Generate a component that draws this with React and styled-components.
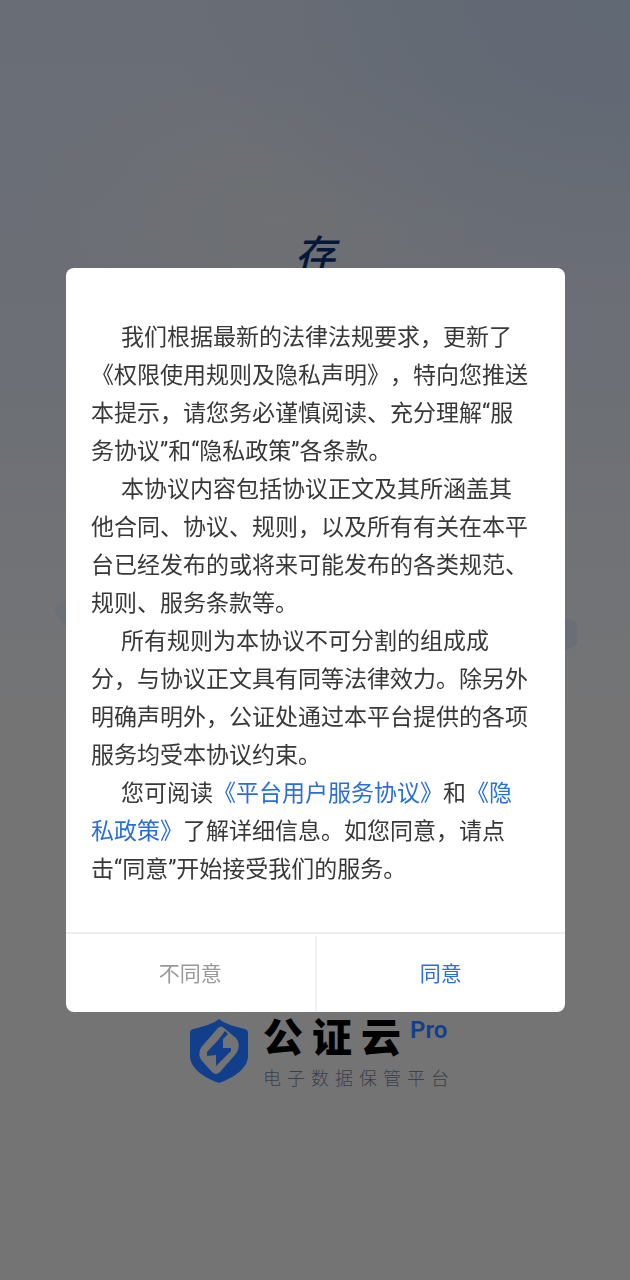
import styled, { createGlobalStyle } from "styled-components";

const GlobalStyle = createGlobalStyle`
  * {
    box-sizing: border-box;
  }
  body {
    margin: 0;
    font-family: Roboto, "Noto Sans CJK SC", sans-serif;
    text-spacing-trim: space-all;
  }
`;

const Splash = styled.main`
  display: flex;
  flex-direction: column;
  align-items: center;
  min-height: 100vh;
  padding: 224px 0 189px;
  background:
    radial-gradient(ellipse 460px 300px at 100% 0, #606874 0%, rgba(96, 104, 116, 0) 100%),
    radial-gradient(ellipse 240px 160px at 44% 220px, #6e7073 0%, rgba(110, 112, 115, 0) 100%),
    linear-gradient(#696d75 0, #6b6e75 300px, #717376 600px, #747474 730px, #747474 100%);
`;

const Slogan = styled.h1`
  margin: 0;
  font-family: "Noto Sans CJK SC", sans-serif;
  font-size: 40px;
  font-style: italic;
  font-weight: 500;
  line-height: 56px;
  color: #06173a;
`;

const Illustration = styled.svg`
  width: 100%;
  height: 120px;
  margin: 290px 0 auto;
`;

const Brand = styled.div`
  display: flex;
  align-items: center;
  gap: 14px;
  padding-left: 14px;
`;

const Shield = styled.svg`
  width: 60px;
  height: 66px;
`;

const BrandText = styled.div`
  display: flex;
  flex-direction: column;
  gap: 4px;
`;

const BrandName = styled.div`
  display: flex;
  align-items: flex-start;
  font-family: "Noto Sans CJK SC", sans-serif;
  font-size: 40px;
  font-weight: 900;
  line-height: 48px;
  letter-spacing: 9px;
  color: #000;
`;

const Edition = styled.span`
  font-family: Roboto, sans-serif;
  font-size: 24px;
  font-weight: 600;
  line-height: 38px;
  letter-spacing: 0;
  color: #123f8c;
`;

const Tagline = styled.div`
  font-family: "Noto Sans CJK SC", sans-serif;
  font-size: 18px;
  font-weight: 300;
  line-height: 28px;
  letter-spacing: 6px;
  color: #3a3f49;
`;

const Overlay = styled.div`
  position: fixed;
  inset: 0;
  display: flex;
  align-items: center;
  padding: 0 65px 0 66px;
`;

const Dialog = styled.section`
  width: 100%;
  border-radius: 8px;
  background: #fff;
  overflow: hidden;
`;

const Content = styled.div`
  padding: 51px 31px 43px 25px;
`;

const Paragraph = styled.p`
  margin: 0;
  font-size: 23px;
  line-height: 38px;
  text-indent: 30px;
  color: #383838;
`;

const Link = styled.a`
  color: #2a6fd6;
  text-decoration: none;
`;

const Actions = styled.div`
  display: flex;
  border-top: 2px solid #eee;
  padding-top: 2px;
`;

const Action = styled.button`
  flex: 1;
  height: 76px;
  padding: 0 0 4px;
  border: 0;
  background: none;
  font-family: inherit;
  font-size: 21px;
  color: ${({ $primary }) => ($primary ? "#2a6fd6" : "#999")};

  & + & {
    border-left: 2px solid #f2f2f2;
  }
`;

const App = () => {
  return (
    <>
      <GlobalStyle />
      <Splash>
        <Slogan>存</Slogan>
        <Illustration viewBox="0 0 630 120" preserveAspectRatio="none" aria-hidden="true">
          <path d="M53 40 68 26V60Z" fill="#6c7177" />
          <path d="M560 44 577 54V74L560 84Z" fill="#696e77" />
        </Illustration>
        <Brand>
          <Shield viewBox="0 0 60 66" aria-hidden="true">
            <path
              d="M30 1C36 6 47 9 56 11Q59 12 59 15V39C58 51 44 60 30 65 16 60 2 51 1 39V15Q1 12 4 11C13 9 24 6 30 1Z"
              fill="#123f8c"
            />
            <path
              d="M29 10Q32 7 35 10L47 20Q51 25 49 32 48 35 45 38L31 54Q27 58 23 54L13 43Q9 38 11 32 12 29 15 26Z"
              fill="#747474"
            />
            <path d="M36 13 39 16 33 22 30 21Z" fill="#123f8c" />
            <path d="M18 38V34L31 20 34 19V30H42V33L27 48V37Z" fill="#123f8c" />
          </Shield>
          <BrandText>
            <BrandName>
              公证云<Edition>Pro</Edition>
            </BrandName>
            <Tagline>电子数据保管平台</Tagline>
          </BrandText>
        </Brand>
      </Splash>
      <Overlay>
        <Dialog role="dialog" aria-modal="true">
          <Content>
            <Paragraph>
              我们根据最新的法律法规要求，更新了《权限使用规则及隐私声明》，特向您推送本提示，请您务必谨慎阅读、充分理解“服务协议”和“隐私政策”各条款。
            </Paragraph>
            <Paragraph>
              本协议内容包括协议正文及其所涵盖其他合同、协议、规则，以及所有有关在本平台已经发布的或将来可能发布的各类规范、规则、服务条款等。
            </Paragraph>
            <Paragraph>
              所有规则为本协议不可分割的组成成分，与协议正文具有同等法律效力。除另外明确声明外，公证处通过本平台提供的各项服务均受本协议约束。
            </Paragraph>
            <Paragraph>
              您可阅读<Link href="#service">《平台用户服务协议》</Link>和<Link href="#privacy">《隐私政策》</Link>了解详细信息。如您同意，请点击“同意”开始接受我们的服务。
            </Paragraph>
          </Content>
          <Actions>
            <Action type="button">不同意</Action>
            <Action type="button" $primary>同意</Action>
          </Actions>
        </Dialog>
      </Overlay>
    </>
  );
};

export default App;
